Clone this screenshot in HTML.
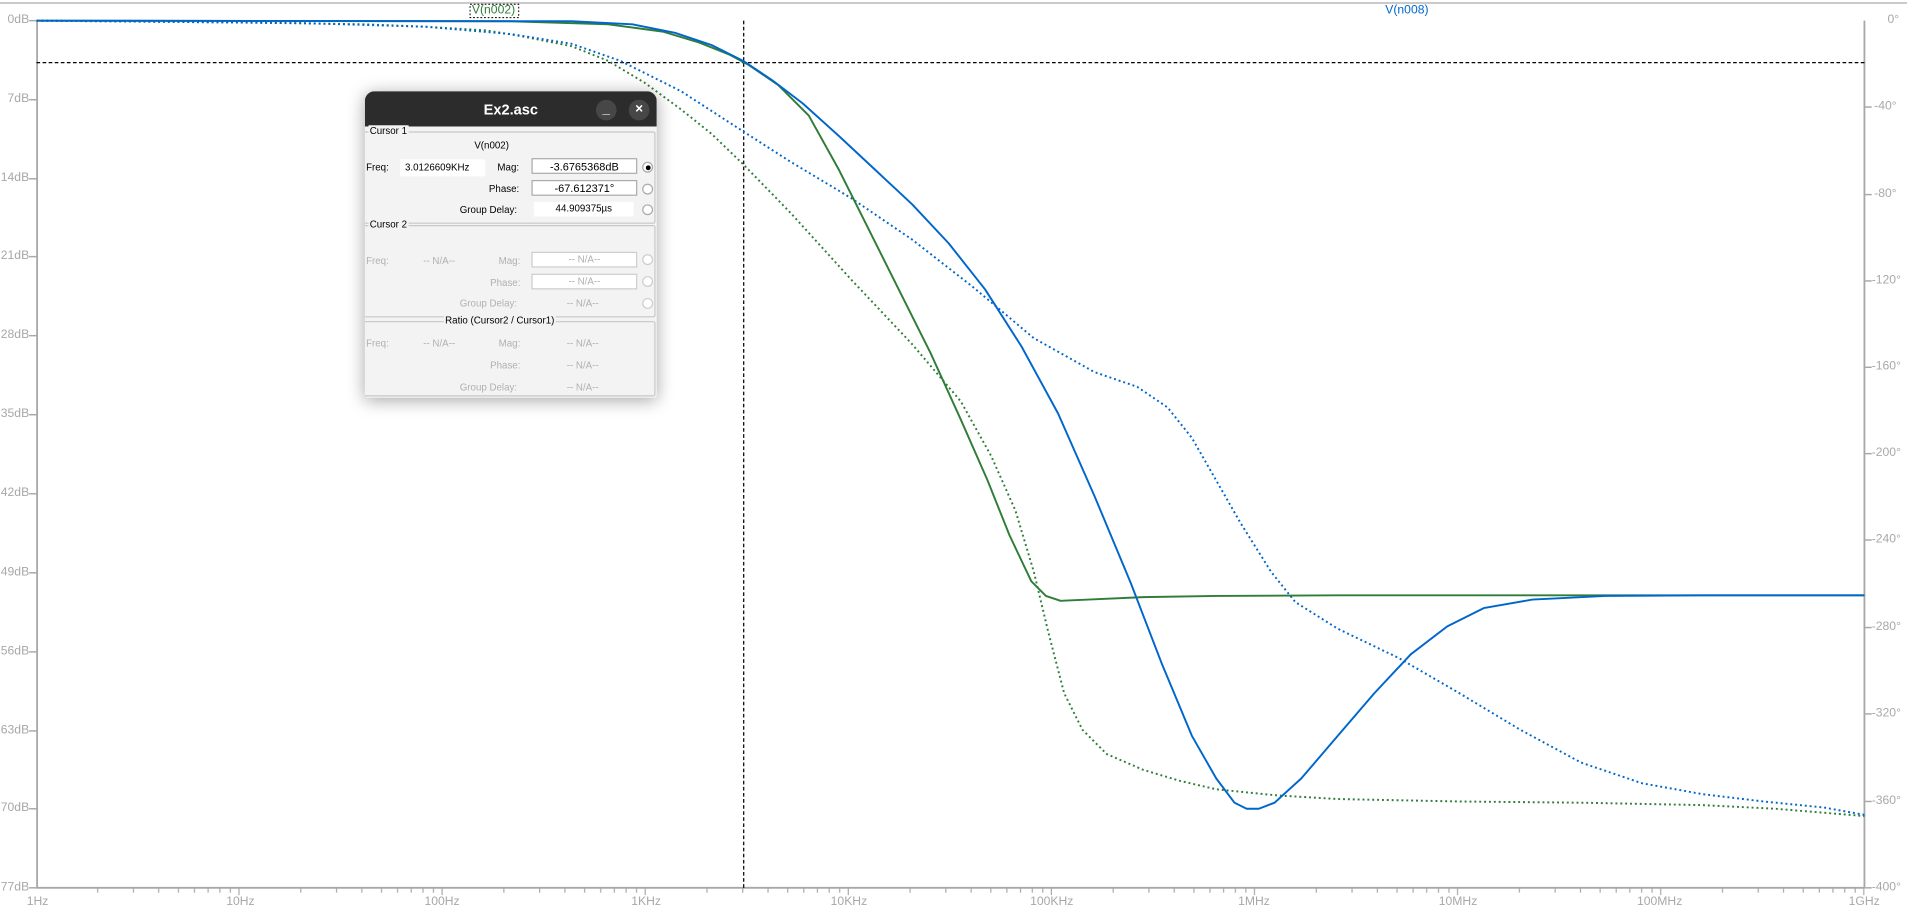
<!DOCTYPE html>
<html><head><meta charset="utf-8"><style>
html,body{margin:0;padding:0;background:#fff;overflow:hidden;width:1907px;height:914px}
#w{position:absolute;left:0;top:0;width:1568px;height:752px;transform:scale(1.21620,1.21620);transform-origin:0 0;font-family:"Liberation Sans","DejaVu Sans",sans-serif}
.l{position:absolute;font-size:10px;color:#a8a8a8;white-space:nowrap}
.ll{right:1544px;text-align:right}
.dlg{position:absolute;left:300px;top:75px;width:240px;height:252px;background:#f3f3f3;border-radius:8px 8px 2px 2px;box-shadow:0 2px 14px rgba(0,0,0,.35);overflow:hidden}
.tb{height:29px;background:#2c2c2c;color:#fff;font-weight:bold;font-size:12px;text-align:center;line-height:30px}
.bt{position:absolute;top:7px;width:17px;height:17px;border-radius:50%;background:#474747;color:#fff;font-size:11px;text-align:center;line-height:16px;font-weight:bold}
.g{position:absolute;left:-2px;width:239px;border:1px solid #c8c8c8;border-radius:2px}
.gt{position:absolute;top:-6px;background:#f3f3f3;font-size:8px;color:#000;padding:0 1px;line-height:10px}
.t{position:absolute;font-size:8px;line-height:10px;white-space:nowrap;color:#000}
.d{color:#b0b0b0}
.bx{position:absolute;left:137px;width:87px;height:13px;background:#fff;border:1px solid #aaa;box-sizing:border-box;font-size:9px;text-align:center;line-height:12px}
.bx.d2{border-color:#ccc;color:#b0b0b0;font-size:8px}
.rd{position:absolute;left:228px;width:9px;height:9px;border:1px solid #aaa;border-radius:50%;box-sizing:border-box;background:#fff}
</style></head><body><div id="w">
<svg width="1568" height="752" style="position:absolute;left:0;top:0">
<defs>
<pattern id="tk" x="30" y="0" width="167" height="752" patternUnits="userSpaceOnUse">
<g stroke="#aaa" stroke-width="1">
<line x1="50.3" y1="730" x2="50.3" y2="734"/><line x1="79.7" y1="730" x2="79.7" y2="734"/><line x1="100.5" y1="730" x2="100.5" y2="734"/><line x1="116.7" y1="730" x2="116.7" y2="734"/><line x1="129.9" y1="730" x2="129.9" y2="734"/><line x1="141.1" y1="730" x2="141.1" y2="734"/><line x1="150.8" y1="730" x2="150.8" y2="734"/><line x1="159.4" y1="730" x2="159.4" y2="734"/><line x1="166.5" y1="730" x2="166.5" y2="736"/>
</g></pattern>
</defs>
<line x1="0" y1="2.5" x2="1568" y2="2.5" stroke="#aaa" stroke-width="1"/>
<rect x="30" y="728" width="1503" height="10" fill="url(#tk)"/>
<g stroke="#a8a8a8" stroke-width="1.5" fill="none">
<line x1="30.5" y1="17" x2="30.5" y2="730"/>
<line x1="1533" y1="17" x2="1533" y2="730"/>
<line x1="30" y1="730" x2="1533" y2="730"/>
</g>
<g stroke="#a8a8a8" stroke-width="1.2">
<line x1="24" y1="17" x2="30" y2="17"/><line x1="24" y1="82" x2="30" y2="82"/><line x1="24" y1="147" x2="30" y2="147"/><line x1="24" y1="211" x2="30" y2="211"/><line x1="24" y1="276" x2="30" y2="276"/><line x1="24" y1="341" x2="30" y2="341"/><line x1="24" y1="406" x2="30" y2="406"/><line x1="24" y1="471" x2="30" y2="471"/><line x1="24" y1="536" x2="30" y2="536"/><line x1="24" y1="601" x2="30" y2="601"/><line x1="24" y1="665" x2="30" y2="665"/><line x1="24" y1="730" x2="30" y2="730"/>
<line x1="1533" y1="88" x2="1539" y2="88"/><line x1="1533" y1="160" x2="1539" y2="160"/><line x1="1533" y1="231" x2="1539" y2="231"/><line x1="1533" y1="302" x2="1539" y2="302"/><line x1="1533" y1="373" x2="1539" y2="373"/><line x1="1533" y1="444" x2="1539" y2="444"/><line x1="1533" y1="516" x2="1539" y2="516"/><line x1="1533" y1="587" x2="1539" y2="587"/><line x1="1533" y1="659" x2="1539" y2="659"/><line x1="1533" y1="730" x2="1539" y2="730"/>
</g>
<line x1="611.5" y1="17" x2="611.5" y2="730" stroke="#000" stroke-width="1" stroke-dasharray="3 2"/>
<line x1="30" y1="51.5" x2="1533" y2="51.5" stroke="#000" stroke-width="1" stroke-dasharray="3 2"/>
<g fill="none" stroke-width="1.6" stroke-linejoin="round">
<path stroke="#2f7d38" stroke-dasharray="1.6 2.4" d="M30 17 L200 18.5 L300 20 L350 22 L400 25 L430 30 L470 38 L500 50 L530 68 L560 90 L585 110 L611 135 L650 175 L700 230 L750 283 L790 330 L815 375 L835 420 L850 470 L862 520 L875 570 L890 600 L910 620 L940 633 L970 642 L1000 649 L1050 654 L1100 657 L1200 659 L1300 660 L1400 662 L1460 665 L1533 671"/>
<path stroke="#0066cc" stroke-dasharray="1.6 2.4" d="M30 17 L250 19 L350 22 L420 28 L470 36 L510 50 L560 75 L611 108 L650 133 L700 163 L750 197 L800 236 L850 278 L900 306 L935 318 L960 335 L980 360 L1000 395 L1020 430 L1045 470 L1065 495 L1100 517 L1150 541 L1200 570 L1250 600 L1300 627 L1350 644 L1400 653 L1450 659 L1500 664 L1533 670"/>
<path stroke="#2f7d38" d="M30 17 L420 17.5 L500 20 L545 26 L575 35 L600 45 L615 53 L640 70 L665 95 L690 140 L715 190 L740 240 L765 290 L790 345 L812 395 L830 440 L848 478 L860 490 L872 494 L895 493 L940 491 L1000 490 L1100 489.5 L1533 489.5"/>
<path stroke="#0066cc" d="M30 17 L470 17.5 L520 20 L555 27 L585 37 L611 50 L635 66 L660 85 L690 112 L720 140 L750 168 L780 200 L810 238 L840 285 L870 340 L900 408 L930 480 L955 545 L980 605 L1000 640 L1015 660 L1025 665 L1035 665 L1048 660 L1070 640 L1100 605 L1130 570 L1160 538 L1190 515 L1220 500 L1260 493 L1320 490 L1400 489.5 L1533 489.5"/>
</g>
<rect x="386.5" y="3.5" width="40" height="11" fill="none" stroke="#000" stroke-width="0.8" stroke-dasharray="1.5 1.5"/>
</svg>
<div class="l" style="left:388px;top:3px;color:#2f7d38;font-size:10px">V(n002)</div>
<div class="l" style="left:1139px;top:3px;color:#0066cc;font-size:10px">V(n008)</div>
<div class="l ll" style="top:11px">0dB</div>
<div class="l ll" style="top:76px">7dB</div>
<div class="l ll" style="top:141px">14dB</div>
<div class="l ll" style="top:205px">21dB</div>
<div class="l ll" style="top:270px">28dB</div>
<div class="l ll" style="top:335px">35dB</div>
<div class="l ll" style="top:400px">42dB</div>
<div class="l ll" style="top:465px">49dB</div>
<div class="l ll" style="top:530px">56dB</div>
<div class="l ll" style="top:595px">63dB</div>
<div class="l ll" style="top:659px">70dB</div>
<div class="l ll" style="top:724px">77dB</div>
<div class="l" style="left:1552px;top:11px">0°</div>
<div class="l" style="left:1541px;top:82px">-40°</div>
<div class="l" style="left:1541px;top:154px">-80°</div>
<div class="l" style="left:1539px;top:225px">-120°</div>
<div class="l" style="left:1539px;top:296px">-160°</div>
<div class="l" style="left:1539px;top:367px">-200°</div>
<div class="l" style="left:1539px;top:438px">-240°</div>
<div class="l" style="left:1539px;top:510px">-280°</div>
<div class="l" style="left:1539px;top:581px">-320°</div>
<div class="l" style="left:1539px;top:653px">-360°</div>
<div class="l" style="left:1539px;top:724px">-400°</div>
<div class="l" style="left:22px;top:736px">1Hz</div>
<div class="l" style="left:186px;top:736px">10Hz</div>
<div class="l" style="left:349px;top:736px">100Hz</div>
<div class="l" style="left:519px;top:736px">1KHz</div>
<div class="l" style="left:683px;top:736px">10KHz</div>
<div class="l" style="left:847px;top:736px">100KHz</div>
<div class="l" style="left:1018px;top:736px">1MHz</div>
<div class="l" style="left:1183px;top:736px">10MHz</div>
<div class="l" style="left:1346px;top:736px">100MHz</div>
<div class="l" style="left:1520px;top:736px">1GHz</div>

<div class="dlg">
<div class="tb">Ex2.asc</div>
<div class="bt" style="left:190px">_</div>
<div class="bt" style="left:217px">×</div>
<div class="g" style="top:33px;height:74px"><span class="gt" style="left:4px">Cursor 1</span></div>
<div class="t" style="left:90px;top:40px">V(n002)</div>
<div class="t" style="left:1px;top:58px">Freq:</div>
<div class="t" style="left:29px;top:56px;background:#fff;padding:2px 4px;width:62px">3.0126609KHz</div>
<div class="t" style="left:109px;top:58px">Mag:</div>
<div class="bx" style="left:137px;top:55px">-3.6765368dB</div>
<div class="rd" style="left:228px;top:58px"></div><div style="position:absolute;left:231px;top:61px;width:4px;height:4px;background:#000;border-radius:50%"></div>
<div class="t" style="left:102px;top:76px">Phase:</div>
<div class="bx" style="left:137px;top:73px">-67.612371°</div>
<div class="rd" style="top:76px"></div>
<div class="t" style="left:78px;top:93px">Group Delay:</div>
<div class="t" style="left:139px;top:91px;background:#fff;width:78px;text-align:center;padding:1px 2px">44.909375µs</div>
<div class="rd" style="top:93px"></div>

<div class="g" style="top:110px;height:74px"><span class="gt" style="left:4px">Cursor 2</span></div>
<div class="t d" style="left:1px;top:135px">Freq:</div>
<div class="t d" style="left:48px;top:135px">-- N/A--</div>
<div class="t d" style="left:110px;top:135px">Mag:</div>
<div class="bx d2" style="top:132px">-- N/A--</div>
<div class="rd" style="top:134px;border-color:#ccc"></div>
<div class="t d" style="left:103px;top:153px">Phase:</div>
<div class="bx d2" style="top:150px">-- N/A--</div>
<div class="rd" style="top:152px;border-color:#ccc"></div>
<div class="t d" style="left:78px;top:170px">Group Delay:</div>
<div class="t d" style="left:166px;top:170px">-- N/A--</div>
<div class="rd" style="top:170px;border-color:#ccc"></div>

<div class="g" style="top:189px;height:60px"><span class="gt" style="left:66px">Ratio (Cursor2 / Cursor1)</span></div>
<div class="t d" style="left:1px;top:203px">Freq:</div>
<div class="t d" style="left:48px;top:203px">-- N/A--</div>
<div class="t d" style="left:110px;top:203px">Mag:</div>
<div class="t d" style="left:166px;top:203px">-- N/A--</div>
<div class="t d" style="left:103px;top:221px">Phase:</div>
<div class="t d" style="left:166px;top:221px">-- N/A--</div>
<div class="t d" style="left:78px;top:239px">Group Delay:</div>
<div class="t d" style="left:166px;top:239px">-- N/A--</div>
</div>
</div></body></html>
